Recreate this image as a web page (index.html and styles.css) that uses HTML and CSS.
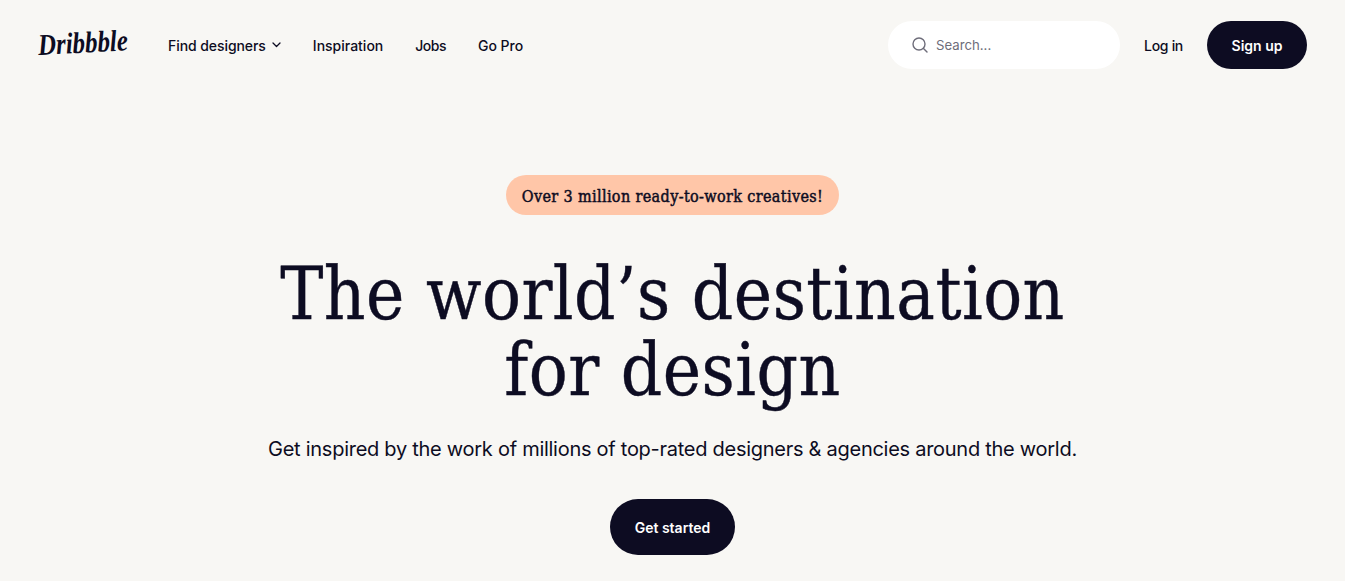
FILE: index.html
```html
<!DOCTYPE html>
<html lang="en">
  <head>
    <meta charset="UTF-8" />
    <meta name="viewport" content="width=device-width, initial-scale=1.0" />
    <title>Dribbble - The world's destination for design</title>
    <link rel="stylesheet" href="styles.css">
  </head>
  <body>
    <header class="nav">
      <div class="logo-box">
        <a class="logo" href="#">Dribbble</a>
      </div>
      <nav class="nav-links">
        <a href="#" class="nav-link nav-find">
          Find designers
          <svg class="chevron" width="9" height="6" viewBox="0 0 9 6" fill="none">
            <path d="M1 1l3.5 3.5L8 1" stroke="#0d0c22" stroke-width="1.3" stroke-linecap="round" stroke-linejoin="round" />
          </svg>
        </a>
        <a href="#" class="nav-link">Inspiration</a>
        <a href="#" class="nav-link nav-jobs">Jobs</a>
        <a href="#" class="nav-link">Go Pro</a>
      </nav>
      <div class="nav-right">
        <label class="search">
          <svg width="16" height="16" viewBox="0 0 16 16" fill="none">
            <circle cx="7" cy="7" r="6" stroke="#6e6d7a" stroke-width="1.4" />
            <path d="M11.5 11.5L15 15" stroke="#6e6d7a" stroke-width="1.4" stroke-linecap="round" />
          </svg>
          <input type="text" placeholder="Search..." />
        </label>
        <a href="#" class="nav-link nav-login">Log in</a>
        <a href="#" class="btn btn-signup">Sign up</a>
      </div>
    </header>
    <main class="hero">
      <span class="badge">Over 3 million ready-to-work creatives!</span>
      <h1 class="hero-title">The world’s destination<br />for design</h1>
      <p class="hero-text">Get inspired by the work of millions of top-rated designers &amp; agencies around the world.</p>
      <a href="#" class="btn btn-start">Get started</a>
    </main>
  </body>
</html>
```

FILE: styles.css
```css
* {
  box-sizing: border-box;
}

body {
  margin: 0;
  height: 581px;
  overflow: hidden;
  background-color: #f8f7f4;
  color: #0d0c22;
  font-family: "Inter", "Liberation Sans", sans-serif;
}

a {
  color: inherit;
  text-decoration: none;
}

.nav {
  display: flex;
  align-items: center;
  height: 90px;
  padding: 0 38px;
}

.logo-box {
  width: 130px;
}

.logo {
  display: inline-block;
  font-family: "Liberation Serif", serif;
  font-size: 30px;
  font-style: italic;
  font-weight: 700;
  transform: rotate(-3deg) scaleX(0.83);
  transform-origin: left center;
}

.nav-links {
  display: flex;
  align-items: center;
  gap: 32px;
}

.nav-link {
  display: flex;
  align-items: center;
  gap: 6px;
  font-size: 14px;
  font-weight: 500;
}

.nav-find {
  letter-spacing: -0.07px;
}

.nav-jobs {
  letter-spacing: -0.5px;
}

.nav-login {
  letter-spacing: -0.3px;
}

.nav-right {
  display: flex;
  align-items: center;
  margin-left: auto;
}

.search {
  display: flex;
  align-items: center;
  gap: 8px;
  width: 232px;
  height: 48px;
  margin-right: 24px;
  padding-left: 24px;
  background-color: #fff;
  border-radius: 24px;
}

.search input {
  width: 150px;
  padding: 0;
  border: none;
  outline: none;
  background: none;
  font-family: inherit;
  font-size: 13.2px;
  color: #0d0c22;
}

.search input::placeholder {
  color: #6e6d7a;
}

.btn {
  display: flex;
  align-items: center;
  justify-content: center;
  background-color: #0d0c22;
  color: #fff;
  font-size: 14px;
  font-weight: 600;
}

.btn-signup {
  width: 100px;
  height: 48px;
  margin-left: 24px;
  border-radius: 24px;
}

.hero {
  display: flex;
  flex-direction: column;
  align-items: center;
  padding-top: 85px;
}

.badge {
  display: flex;
  align-items: center;
  height: 40px;
  padding: 2px 16px 0;
  background-color: #ffc6a8;
  border-radius: 20px;
  font-family: "DejaVu Serif Condensed", "Liberation Serif", serif;
  font-size: 16px;
  font-weight: 400;
  letter-spacing: 0.37px;
  -webkit-text-stroke: 0.45px #0d0c22;
}

.hero-title {
  margin: 41px 0 0;
  font-family: "DejaVu Serif Condensed", "Liberation Serif", serif;
  font-size: 72px;
  font-weight: 400;
  letter-spacing: 0.5px;
  line-height: 76px;
  text-align: center;
  -webkit-text-stroke: 0.4px #0d0c22;
}

.hero-text {
  margin: 27px 0 0;
  font-size: 20px;
  letter-spacing: -0.27px;
  line-height: 28px;
}

.btn-start {
  width: 125px;
  height: 56px;
  margin-top: 36px;
  border-radius: 28px;
}
```
